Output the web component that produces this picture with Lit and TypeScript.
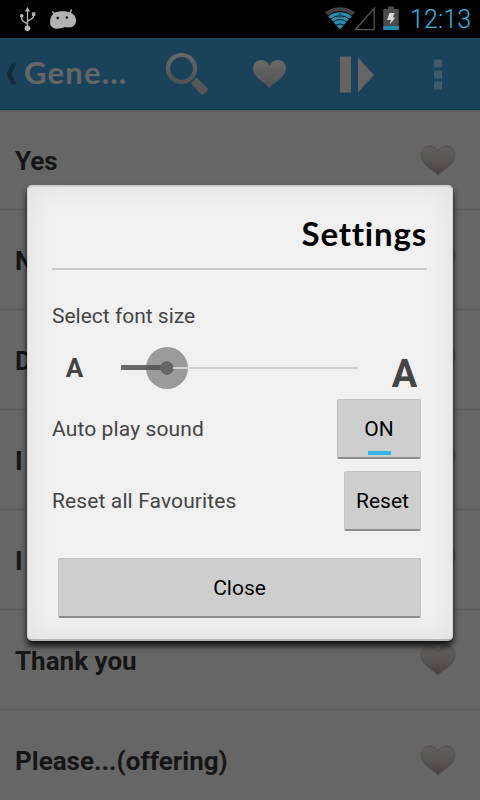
import {LitElement, html, css, svg} from 'lit';
import {customElement, property, state} from 'lit/decorators.js';

@customElement('phrase-heart')
export class PhraseHeart extends LitElement {
  static styles = css`
    :host {
      display: block;
      width: 36px;
      height: 32px;
    }

    svg {
      display: block;
    }
  `;

  render() {
    return html`
      <svg width="36" height="32" viewBox="0 0 36 32">
        <defs>
          <linearGradient id="fill" x1="0" y1="0" x2="0" y2="1">
            <stop offset="0" stop-color="#625e5e" />
            <stop offset="0.5" stop-color="#5a5555" />
            <stop offset="1" stop-color="#443e3e" />
          </linearGradient>
        </defs>
        <path
          d="M18 30.3C15 25.5 1 20.5 .9 10.5C.9 4.5 5 1 9.5 1C13.5 1 16.5 3.5 18 6.2C19.5 3.5 22.5 1 26.5 1C31 1 35.1 4.5 35.1 10.5C35 20.5 21 25.5 18 30.3Z"
          fill="url(#fill)"
          stroke="#524d4d"
          stroke-width="0.8"
        />
      </svg>
    `;
  }
}

@customElement('status-bar')
export class StatusBar extends LitElement {
  @property() time = '';

  static styles = css`
    :host {
      display: flex;
      height: 38px;
      background: #000;
      align-items: center;
      justify-content: space-between;
    }

    svg {
      display: block;
    }

    .status {
      display: flex;
      align-items: center;
    }

    .time {
      box-sizing: border-box;
      width: 71px;
      height: 38px;
      padding: 1px 0 0 1px;
      font-size: 25px;
      font-weight: 300;
      line-height: 38px;
      letter-spacing: 0.1px;
      color: #33b5e5;
      white-space: nowrap;
    }
  `;

  render() {
    return html`
      <svg width="80" height="38" viewBox="0 0 80 38">
        <g fill="none" stroke="#b3b3b3" stroke-width="1.3">
          <path d="M27.5 28V9M27.5 24.5C27 22 21.7 22.5 21.7 18.5V16M27.5 21.5C28 19.5 33.5 20 33.5 16V14" />
        </g>
        <g fill="#b3b3b3">
          <circle cx="27.5" cy="28.3" r="2.8" />
          <circle cx="21.7" cy="15.8" r="1.9" />
          <rect x="31.8" y="12.3" width="3.6" height="3.6" />
          <path d="M27.5 7L30 11.5H25Z" />
          <path d="M54.5 12.7C59 10.7 66.5 10.7 71 12.7C77 15.5 77.5 23 73.5 26C70 28.5 66.5 26.8 63.5 27.5C60 28.5 56 29.5 52.5 27.5C48.5 25 49.5 16 54.5 12.7Z" />
        </g>
        <path d="M55 14L52.2 11.5M70 13.5L71.5 9.5" stroke="#b3b3b3" stroke-width="1.4" />
        <circle cx="57.7" cy="18" r="1.2" fill="#000" />
        <circle cx="66.8" cy="17.5" r="1.2" fill="#000" />
      </svg>
      <div class="status">
        <svg width="85" height="38" viewBox="0 0 85 38">
          <path d="M16 29.5L1 12.3Q16 2 31 12.3Z" fill="#444" />
          <path d="M16 29.5L4.2 16Q16 8.5 27.8 16Z" fill="#258db3" />
          <g fill="none" stroke="#000" stroke-width="0.9">
            <path d="M3.5 15.8Q16 7 28.5 15.8M6.5 19Q16 12.5 25.5 19M9 22Q16 17 23 22M12 25.2Q16 22.5 20 25.2" />
          </g>
          <path d="M16 12L19.5 17.5H12.5Z" fill="#24516a" />
          <path d="M31.3 29.7H50.2V8.3Z" fill="none" stroke="#555" stroke-width="1.3" />
          <path d="M59.3 9H64V6.5H70V9H74.7V30H59.3Z" fill="#4b4b4b" />
          <rect x="59.3" y="26" width="15.4" height="4" fill="#258db3" />
          <path d="M65.5 13H70.5L69 17.3L71 18L65.5 24.7L67 20H63Z" fill="#d8d8d8" />
        </svg>
        <div class="time">${this.time}</div>
      </div>
    `;
  }
}

@customElement('action-bar')
export class ActionBar extends LitElement {
  @property() heading = '';

  static styles = css`
    :host {
      display: flex;
      align-items: center;
      box-sizing: border-box;
      height: 72px;
      background: #1a435b;
      border-bottom: 1px solid #183a4e;
    }

    svg {
      display: block;
      flex: none;
    }

    .heading {
      width: 121px;
      padding-bottom: 3px;
      font-family: Lato, sans-serif;
      font-size: 31px;
      font-weight: 700;
      line-height: 40px;
      letter-spacing: 1.2px;
      color: #666;
      white-space: nowrap;
    }
  `;

  render() {
    return html`
      <svg width="24" height="72" viewBox="0 0 24 72">
        <path d="M11.5 25.5H16.3L11.8 36L16.3 46.5H11.5L6.5 36Z" fill="#112d3d" />
      </svg>
      <div class="heading">${this.heading}</div>
      <svg width="335" height="72" viewBox="145 0 335 72">
        <defs>
          <linearGradient id="metal" x1="0" y1="0" x2="0" y2="1">
            <stop offset="0" stop-color="#686868" />
            <stop offset="1" stop-color="#525252" />
          </linearGradient>
        </defs>
        <circle cx="181.5" cy="30.5" r="13.5" fill="none" stroke="url(#metal)" stroke-width="4.2" />
        <path d="M190.7 45.3L196.5 39.5L207.2 50Q208.5 51.5 207 53.3L204.5 55.8Q202.5 57.3 201 56.2Z" fill="#565656" />
        <path
          d="M269.5 50.5C267 45.5 253.2 40 253 30.5C253 25.5 256.5 22 261 22C265 22 268 24 269.5 27.5C271 24 274 22 278 22C282.5 22 286.2 25.5 286 30.5C285.8 40 272 45.5 269.5 50.5Z"
          fill="url(#metal)"
        />
        <path d="M340 18.5H351V54.5H340ZM358 19.5L374 37L358 54.5Z" fill="#646464" />
        ${[21.5, 32.5, 43.5].map((y) => svg`<rect x="434" y=${y} width="8" height="8" fill="#415b6a" />`)}
      </svg>
    `;
  }
}

@customElement('settings-dialog')
export class SettingsDialog extends LitElement {
  @property({ type: Number }) fontSize = 20;
  @property({ type: Boolean }) autoPlay = true;

  static styles = css`
    :host {
      display: block;
      box-sizing: border-box;
      width: 426px;
      height: 456px;
      padding: 26px 25px 0 24px;
      border: 1px solid #d2d2d2;
      border-top: 2px solid #cfcfcf;
      border-bottom: 2px solid #b5b5b5;
      border-radius: 5px;
      background: #f0f0f0;
      box-shadow: inset 0 0 28px #dedede, inset 0 1px #f5f5f5, 0 5px 6px rgba(0, 0, 0, 0.85);
      color: #444;
    }

    .title {
      height: 55px;
      border-bottom: 2px solid #c9c9c9;
      font-family: Lato, sans-serif;
      font-size: 33px;
      line-height: 40px;
      font-weight: 700;
      font-variant-ligatures: none;
      letter-spacing: 0.8px;
      color: #000;
      text-align: right;
    }

    .label {
      font-size: 21px;
      letter-spacing: 0.12px;
      white-space: nowrap;
    }

    .label--size {
      line-height: 28px;
      padding-top: 32px;
      letter-spacing: 0;
    }

    .sizes {
      display: flex;
      box-sizing: border-box;
      height: 69px;
      padding-top: 6px;
      align-items: center;
      font-weight: 700;
    }

    .sizes__small {
      width: 45px;
      font-size: 26px;
      text-align: center;
    }

    .sizes__large {
      width: 45px;
      margin-left: auto;
      padding-top: 12px;
      font-size: 38px;
      text-align: center;
    }

    .slider {
      display: flex;
      align-items: center;
      width: 237px;
      margin-left: 24px;
    }

    .slider__done {
      height: 5px;
      margin-right: -22px;
      background: #686868;
    }

    .slider__thumb {
      width: 14px;
      height: 14px;
      flex: none;
      border: 14.5px solid rgba(80, 80, 80, 0.53);
      border-radius: 50%;
      background: #666;
      background-clip: padding-box;
    }

    .slider__rest {
      height: 2px;
      flex: 1;
      margin-left: -15px;
      background: #d0d0d0;
    }

    .row {
      display: flex;
      align-items: center;
      justify-content: space-between;
      height: 60px;
      padding-right: 6px;
      margin-bottom: 12px;
    }

    button {
      display: flex;
      flex-direction: column;
      align-items: center;
      justify-content: center;
      box-sizing: border-box;
      height: 60px;
      padding: 0;
      border: 1px solid #c3c3c3;
      border-bottom: 2px solid #8c8c8c;
      border-radius: 2px;
      background: #cecece;
      font: 21px/26px Roboto, sans-serif;
      color: #000;
    }

    .toggle {
      width: 84px;
      justify-content: flex-start;
      padding-top: 16px;
    }

    .toggle__mark {
      width: 23px;
      height: 4px;
      margin-top: 9px;
      background: #aaa;
    }

    .toggle__mark--on {
      background: #33b5e5;
    }

    .reset {
      width: 77px;
    }

    .close {
      width: 363px;
      margin: 27px 0 0 6px;
    }
  `;

  toggle() {
    this.autoPlay = !this.autoPlay;
  }

  close() {
    this.dispatchEvent(new CustomEvent('close'));
  }

  render() {
    return html`
      <div class="title">Settings</div>
      <div class="label label--size">Select font size</div>
      <div class="sizes">
        <div class="sizes__small">A</div>
        <div class="slider">
          <div class="slider__done" style="width: ${this.fontSize}%"></div>
          <div class="slider__thumb"></div>
          <div class="slider__rest"></div>
        </div>
        <div class="sizes__large">A</div>
      </div>
      <div class="row">
        <div class="label">Auto play sound</div>
        <button class="toggle" @click=${this.toggle}>
          ${this.autoPlay ? 'ON' : 'OFF'}
          <span class="toggle__mark ${this.autoPlay ? 'toggle__mark--on' : ''}"></span>
        </button>
      </div>
      <div class="row">
        <div class="label">Reset all Favourites</div>
        <button class="reset">Reset</button>
      </div>
      <button class="close" @click=${this.close}>Close</button>
    `;
  }
}

@customElement('app-root')
export class AppRoot extends LitElement {
  @state() open = true;

  phrases = ['Yes', 'N', 'D', 'I', 'I', 'Thank you', 'Please...(offering)'];

  static styles = css`
    :host {
      display: block;
      position: relative;
      width: 480px;
      height: 800px;
      overflow: hidden;
      background: #666;
      font-family: Roboto, sans-serif;
    }

    .list {
      background: linear-gradient(#595959, #666 3px);
    }

    .phrase {
      display: flex;
      align-items: center;
      justify-content: space-between;
      box-sizing: border-box;
      height: 100px;
      padding: 2px 24px 0 15px;
      border-bottom: 1px solid #5b5b5b;
      font-size: 26px;
      font-weight: 700;
      color: #161616;
    }

    settings-dialog {
      position: absolute;
      left: 27px;
      top: 185px;
    }
  `;

  render() {
    return html`
      <status-bar time="12:13"></status-bar>
      <action-bar heading="Gene..."></action-bar>
      <div class="list">
        ${this.phrases.map(
          (phrase) => html`
            <div class="phrase">
              <span>${phrase}</span>
              <phrase-heart></phrase-heart>
            </div>
          `
        )}
      </div>
      ${this.open
        ? html`<settings-dialog @close=${() => (this.open = false)}></settings-dialog>`
        : ''}
    `;
  }
}
